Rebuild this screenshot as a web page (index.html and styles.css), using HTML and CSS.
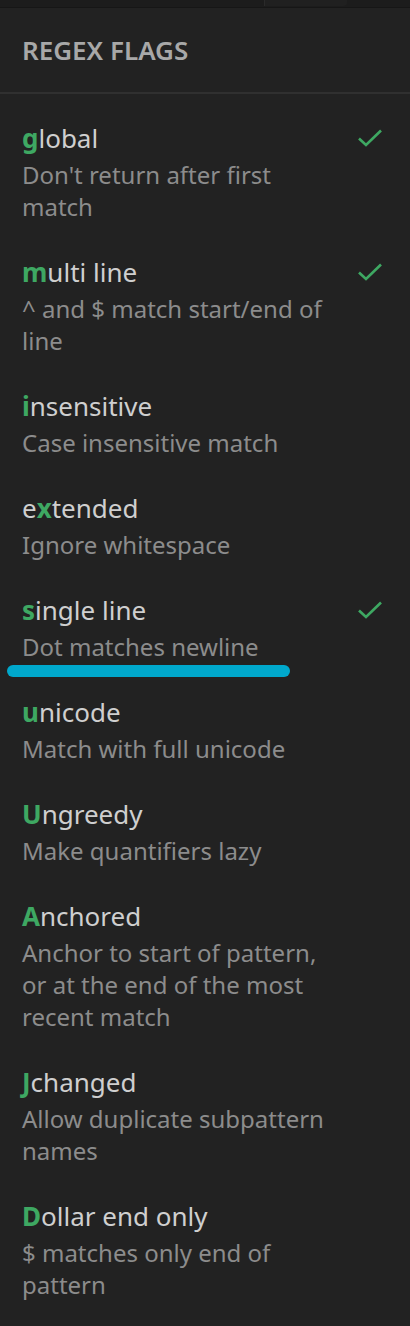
FILE: index.html
```html
<!DOCTYPE html>
<html lang="en">
<head>
	<meta charset="UTF-8">
	<title>Regex flags</title>
	<link rel="stylesheet" href="styles.css">
</head>
<body>
	<div class="topbar">
		<div class="topbar-tab"></div>
	</div>
	<div class="panel-header">
		<h2>REGEX FLAGS</h2>
	</div>
	<ul class="flags">
		<li class="flag checked">
			<div class="flag-text">
				<div class="flag-name"><b>g</b>lobal</div>
				<div class="flag-desc">Don't return after first match</div>
			</div>
			<svg class="check" viewBox="0 0 24 18"><path d="M1 9.5 L8 16 L23 1.5"/></svg>
		</li>
		<li class="flag checked">
			<div class="flag-text">
				<div class="flag-name"><b>m</b>ulti line</div>
				<div class="flag-desc">^ and $ match start/end of line</div>
			</div>
			<svg class="check" viewBox="0 0 24 18"><path d="M1 9.5 L8 16 L23 1.5"/></svg>
		</li>
		<li class="flag">
			<div class="flag-text">
				<div class="flag-name"><b>i</b>nsensitive</div>
				<div class="flag-desc">Case insensitive match</div>
			</div>
		</li>
		<li class="flag">
			<div class="flag-text">
				<div class="flag-name">e<b>x</b>tended</div>
				<div class="flag-desc">Ignore whitespace</div>
			</div>
		</li>
		<li class="flag checked focused">
			<div class="flag-text">
				<div class="flag-name"><b>s</b>ingle line</div>
				<div class="flag-desc">Dot matches newline</div>
			</div>
			<svg class="check" viewBox="0 0 24 18"><path d="M1 9.5 L8 16 L23 1.5"/></svg>
			<span class="focus-bar"></span>
		</li>
		<li class="flag">
			<div class="flag-text">
				<div class="flag-name"><b>u</b>nicode</div>
				<div class="flag-desc">Match with full unicode</div>
			</div>
		</li>
		<li class="flag">
			<div class="flag-text">
				<div class="flag-name"><b>U</b>ngreedy</div>
				<div class="flag-desc">Make quantifiers lazy</div>
			</div>
		</li>
		<li class="flag">
			<div class="flag-text">
				<div class="flag-name"><b>A</b>nchored</div>
				<div class="flag-desc">Anchor to start of pattern, or at the end of the most recent match</div>
			</div>
		</li>
		<li class="flag">
			<div class="flag-text">
				<div class="flag-name"><b>J</b>changed</div>
				<div class="flag-desc">Allow duplicate subpattern names</div>
			</div>
		</li>
		<li class="flag">
			<div class="flag-text">
				<div class="flag-name"><b>D</b>ollar end only</div>
				<div class="flag-desc">$ matches only end of pattern</div>
			</div>
		</li>
	</ul>
</body>
</html>
```

FILE: styles.css
```css
body {
	margin: 0;
	background-color: #222222;
	font-family: "Noto Sans", "Open Sans", sans-serif;
	color: #cccccc;
}
.topbar {
	height: 7px;
	background-color: #1c1c1c;
	border-bottom: 1px solid #161616;
	padding-left: 264px;
}
.topbar-tab {
	width: 82px;
	height: 6px;
	background-color: #202020;
	border-left: 1px solid #2a2a2a;
	border-bottom-right-radius: 4px;
}
.panel-header {
	height: 86px;
	display: flex;
	align-items: center;
	padding: 0 22px;
	border-bottom: 2px solid #303030;
	box-sizing: border-box;
}
.panel-header h2 {
	margin: 0;
	font-size: 26px;
	font-weight: 600;
	color: #a8a8a8;
}
.flags {
	list-style: none;
	margin: 0;
	padding: 9px 0 0 0;
}
.flag {
	position: relative;
	display: flex;
	align-items: flex-start;
	padding: 14px 28px 14px 22px;
}
.flag-text {
	width: 308px;
}
.flag-name {
	font-size: 26px;
	line-height: 42px;
	color: #cfcfcf;
}
.flag-name b {
	color: #3ea862;
	font-weight: 700;
}
.flag-desc {
	font-size: 24px;
	line-height: 32px;
	color: #8c8c8c;
}
.check {
	margin-left: auto;
	margin-top: 12px;
	width: 24px;
	height: 18px;
	fill: none;
	stroke: #3ea862;
	stroke-width: 2.6;
}
.focus-bar {
	position: absolute;
	left: 7px;
	bottom: 0;
	width: 283px;
	height: 12px;
	border-radius: 6px;
	background-color: #00a8cc;
}
```
